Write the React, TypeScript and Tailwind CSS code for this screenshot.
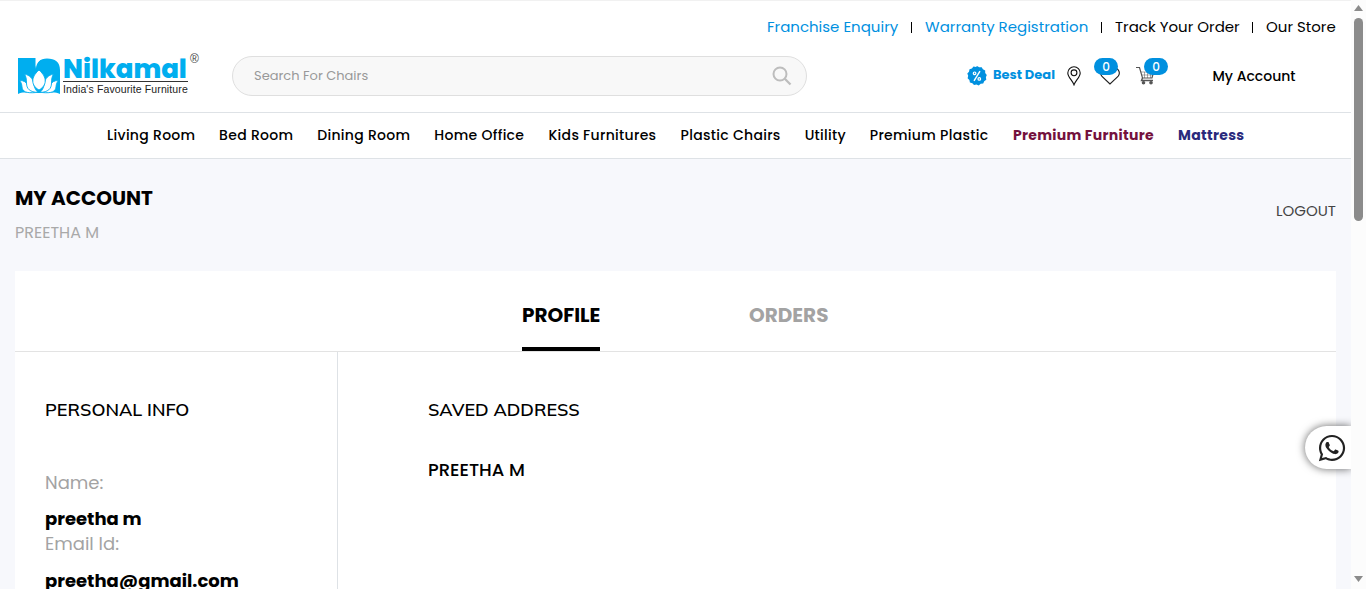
import React from "react";
import { FaWhatsapp } from "react-icons/fa";

const topLinks = [
  { label: "Franchise Enquiry", cls: "w-[131px] text-[#0090df]" },
  { label: "Warranty Registration", cls: "w-[163px] text-[#0090df]" },
  { label: "Track Your Order", cls: "w-[124px] text-black" },
  { label: "Our Store", cls: "w-[70px] text-black" },
];

const navLinks = [
  { label: "Living Room", cls: "w-[88px] font-medium" },
  { label: "Bed Room", cls: "w-[74px] font-medium" },
  { label: "Dining Room", cls: "w-[93px] font-medium" },
  { label: "Home Office", cls: "w-[90px] font-medium" },
  { label: "Kids Furnitures", cls: "w-[108px] font-medium" },
  { label: "Plastic Chairs", cls: "w-[100px] font-medium" },
  { label: "Utility", cls: "w-[41px] font-medium" },
  { label: "Premium Plastic", cls: "w-[119px] font-medium" },
  { label: "Premium Furniture", cls: "w-[141px] font-bold text-[#74113d]" },
  { label: "Mattress", cls: "w-[66px] font-bold text-[#29297c]" },
];

function Logo() {
  return (
    <div className="flex h-[44px] w-[184px] shrink-0 items-start">
      <svg className="mt-[5px] h-[36px] w-[42px] shrink-0" viewBox="0 0 42 36">
        <path d="M0 0H17.500V11C18 4 22 .5 29 .5C37 .5 42 4 42 12V36C37 33.500 33 34.500 30 35H12C8 34.500 4 34 0 36Z" fill="#00aeef" />
        <path d="M18.500 0H26C22 1 19 4 18 10Z" fill="#fff" />
        <g fill="#fff" stroke="#00aeef" strokeWidth="0.900">
          <path d="M1.500 22.500C6 22.500 8 24 9.500 27C11 30 14 32 18 34.500C8 35.500 4.500 33.500 4 29C3.800 26 3 24 1.500 22.500Z" />
          <path d="M40.500 22.500C36 22.500 34 24 32.500 27C31 30 28 32 24 34.500C34 35.500 37.500 33.500 38 29C38.200 26 39 24 40.500 22.500Z" />
          <path d="M6.500 16C12 17.500 14.500 20 15.500 25C16 29 17.500 32 20 34.500C12 34 8.500 31 8.500 25C8.500 21 8 18.500 6.500 16Z" />
          <path d="M35.500 16C30 17.500 27.500 20 26.500 25C26 29 24.500 32 22 34.500C30 34 33.500 31 33.500 25C33.500 21 34 18.500 35.500 16Z" />
          <path d="M21 12C16.500 16 14.800 19.500 14.800 23C14.800 27 17.500 30 21 32C24.500 30 27.200 27 27.200 23C27.200 19.500 25.500 16 21 12Z" />
        </g>
      </svg>
      <div className="ml-[3px] w-[126px] shrink-0">
        <div className="h-[28px] whitespace-nowrap text-[26px] font-extrabold leading-[33px] text-[#00aeef]">
          Nilkamal
        </div>
        <div className="h-px w-[125px] bg-[#333]" />
        <div className="whitespace-nowrap font-['Liberation_Sans',sans-serif] text-[10.500px] leading-[14px] tracking-[0.120px] text-[#222]">
          India's Favourite Furniture
        </div>
      </div>
      <span className="ml-[1px] font-['Liberation_Sans',sans-serif] text-[12px] leading-[12px] text-[#444]">®</span>
    </div>
  );
}

function DealBadge() {
  return (
    <svg className="h-[20px] w-[20px]" viewBox="0 0 20 20">
      <path
        d="M10 0L12.200 1.300L14.700 1.200L15.900 3.300L18.200 4.500V7L19.800 9L18.900 11.300L19.300 13.800L17.200 15.200L16.200 17.600L13.700 17.800L11.700 19.500L9.500 18.500L7 19.100L5.400 17.200L2.900 16.500L2.400 14L.6 12.300L1.200 9.800L.3 7.500L2 5.700L2.500 3.200L4.900 2.500L6.500 .6L9 1.100Z"
        fill="#0090df"
      />
      <g fill="none" stroke="#fff">
        <path d="M13 5.200L7 14.800" strokeWidth="1.400" />
        <circle cx="7.600" cy="7.300" r="1.300" strokeWidth="1.200" />
        <circle cx="12.300" cy="12.900" r="1.300" strokeWidth="1.200" />
      </g>
    </svg>
  );
}

function CountBadge() {
  return (
    <span className="absolute -top-[8px] flex h-[17px] w-[24px] items-center justify-center rounded-full bg-[#0090df] text-[12px] font-medium leading-none text-white">
      0
    </span>
  );
}

function Header() {
  return (
    <header className="h-[113px] shrink-0 border-b border-[#dee2e6] bg-white">
      <div className="flex h-[53px] items-center justify-end border-t border-[#f1f1f1] pr-[15px] text-[15px]">
        {topLinks.map((l, i) => (
          <React.Fragment key={l.label}>
            {i > 0 && <span className="mx-[13px] h-[11px] w-px bg-black" />}
            <a className={`whitespace-nowrap ${l.cls}`}>{l.label}</a>
          </React.Fragment>
        ))}
      </div>
      <div className="flex items-start pl-[18px]">
        <Logo />
        <div className="ml-[30px] mt-[3px] flex h-[40px] w-[575px] shrink-0 items-center justify-between rounded-full border border-[#dfdfdf] bg-[#f8f8f8] pl-[21px] pr-[14px]">
          <span className="text-[13px] text-[#999]">Search For Chairs</span>
          <svg className="h-[20px] w-[20px]" viewBox="0 0 20 20" fill="none" stroke="#bdbdbd" strokeWidth="2">
            <circle cx="8" cy="8" r="6.500" />
            <path d="M12.800 12.800L18.500 18.500" strokeWidth="2.300" />
          </svg>
        </div>
        <div className="ml-[160px] mt-[13px] flex h-[20px] items-center">
          <DealBadge />
          <span className="-mt-[2px] ml-[6px] w-[63px] whitespace-nowrap text-[13px] font-bold text-[#0090df]">Best Deal</span>
          <svg className="ml-[11px] h-[20px] w-[14px]" viewBox="0 0 14 20" fill="none" stroke="#111" strokeWidth="1.100">
            <path d="M7 18.800C5.500 14.500 .8 11 .8 6.900A6.200 6.200 0 0 1 13.200 6.900C13.200 11 8.500 14.500 7 18.800Z" />
            <circle cx="7" cy="6.800" r="2.900" />
          </svg>
          <div className="relative ml-[13px] h-[20px] w-[26px]">
            <svg className="ml-[6px] h-[20px] w-[20px]" viewBox="0 0 20 20" fill="none" stroke="#222" strokeWidth="1.100">
              <path d="M10 18L2 10.500C-1.500 6 3 0 8 2.500L10 4.500L12 2.500C17 0 21.500 6 18 10.500Z" />
            </svg>
            <CountBadge />
          </div>
          <div className="relative ml-[16px] h-[20px] w-[32px] pl-[8px]">
            <svg className="-ml-[8px] -mt-[1px] h-[20px] w-[19px]" viewBox="0 0 19 20" fill="none" stroke="#555" strokeWidth="1.200">
              <path d="M0 2.500H3.500L6.500 13H16L18 5.500" />
              <path d="M5 7H18M5.500 10H17M8.500 7V13M11.500 7V13M14.500 7V13" strokeWidth="0.500" />
              <path d="M6.500 13L5.500 15.500H17" strokeWidth="1.400" />
              <circle cx="7.500" cy="17.700" r="1.200" fill="#555" />
              <circle cx="15" cy="17.700" r="1.200" fill="#555" />
            </svg>
            <CountBadge />
          </div>
          <span className="ml-[44.500px] w-[84px] whitespace-nowrap text-[14px] font-medium text-black">My Account</span>
        </div>
      </div>
    </header>
  );
}

function PersonalInfo() {
  return (
    <section className="w-[323px] shrink-0 border-r border-[#dee2e6] pl-[30px] pt-[44px]">
      <h2 className="h-[72px] font-['Mulish','Nunito','Open_Sans',sans-serif] text-[18px] font-semibold leading-[28px] text-black">PERSONAL INFO</h2>
      <p className="text-[18px] leading-[30px] text-[#a3a3a3]">Name:</p>
      <p className="mt-[6px] text-[18px] font-bold leading-[30px] text-black">preetha m</p>
      <p className="-mt-[5px] text-[18px] leading-[30px] text-[#a3a3a3]">Email Id:</p>
      <p className="mt-[7px] text-[18px] font-bold leading-[30px] text-black">preetha@gmail.com</p>
    </section>
  );
}

function Scrollbar() {
  return (
    <div className="flex w-[15px] shrink-0 flex-col items-center bg-[#fcfcfc]">
      <svg className="mt-[5px] h-[6px] w-[9px]" viewBox="0 0 9 6"><path d="M4.500 0L9 6H0Z" fill="#8b8b8b" /></svg>
      <div className="mt-[7px] h-[203px] w-[9px] rounded-full bg-[#8b8b8b]" />
      <svg className="mb-[7px] mt-auto h-[6px] w-[9px]" viewBox="0 0 9 6"><path d="M0 0H9L4.500 6Z" fill="#8b8b8b" /></svg>
    </div>
  );
}

export default function App() {
  return (
    <div className="flex h-[589px] w-[1366px] overflow-hidden font-['Poppins','Inter',sans-serif]">
      <div className="relative flex w-[1351px] shrink-0 flex-col overflow-hidden bg-[#f7f8fc]">
        <Header />
        <nav className="flex h-[46px] shrink-0 items-center justify-between border-b border-[#dee2e6] bg-white pl-[107px] pr-[107px] text-[14px] tracking-[0.3px] text-black">
          {navLinks.map((l) => (
            <a key={l.label} className={`whitespace-nowrap ${l.cls}`}>{l.label}</a>
          ))}
        </nav>
        <div className="flex h-[112px] shrink-0 justify-between px-[15px] pt-[24px]">
          <div>
            <h1 className="text-[20px] font-bold leading-[30px] text-black">MY ACCOUNT</h1>
            <p className="mt-[8px] text-[16px] leading-[24px] text-[#a9a9a9]">PREETHA M</p>
          </div>
          <a className="mt-[18px] w-[60px] whitespace-nowrap text-[15px] leading-[20px] text-[#444]">LOGOUT</a>
        </div>
        <main className="mx-[15px] flex grow flex-col bg-white">
          <div className="flex h-[81px] shrink-0 justify-center gap-[149px] border-b border-[#e3e3e3] pt-[29px] text-[20px] font-bold leading-[30px]">
            <a className="w-[78px] whitespace-nowrap border-b-4 border-black text-black">PROFILE</a>
            <a className="w-[80px] whitespace-nowrap text-[#a3a3a3]">ORDERS</a>
          </div>
          <div className="flex grow">
            <PersonalInfo />
            <section className="pl-[90px] pt-[44px] text-black">
              <h2 className="font-['Mulish','Nunito','Open_Sans',sans-serif] text-[18px] font-semibold leading-[28px]">SAVED ADDRESS</h2>
              <p className="mt-[31px] text-[18px] font-medium leading-[30px]">PREETHA M</p>
            </section>
          </div>
        </main>
        <div className="absolute left-[1305px] top-[426px] flex h-[43px] w-[46px] items-center rounded-l-full bg-white pl-[13px] shadow-[0_0_8px_rgba(0,0,0,0.6)]">
          <FaWhatsapp className="h-[30px] w-[28px] text-[#222]" />
        </div>
      </div>
      <Scrollbar />
    </div>
  );
}
